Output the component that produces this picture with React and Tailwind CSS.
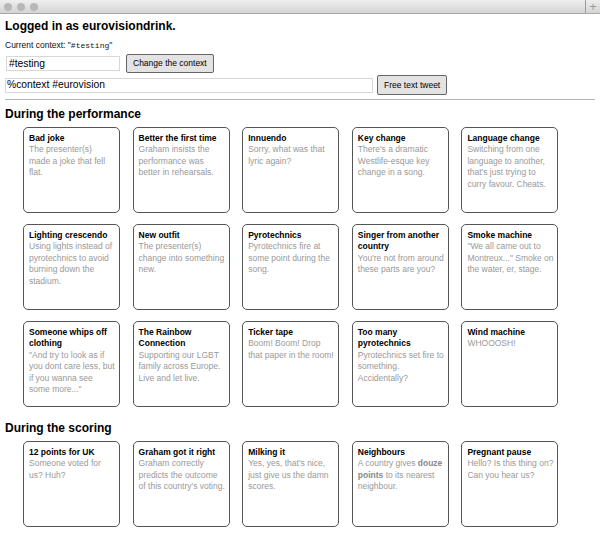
const performance = [
  { title: 'Bad joke', text: 'The presenter(s) made a joke that fell flat.' },
  { title: 'Better the first time', text: 'Graham insists the performance was better in rehearsals.' },
  { title: 'Innuendo', text: 'Sorry, what was that lyric again?' },
  { title: 'Key change', text: "There's a dramatic Westlife-esque key change in a song." },
  { title: 'Language change', text: "Switching from one language to another, that's just trying to curry favour. Cheats." },
  { title: 'Lighting crescendo', text: 'Using lights instead of pyrotechnics to avoid burning down the stadium.' },
  { title: 'New outfit', text: 'The presenter(s) change into something new.' },
  { title: 'Pyrotechnics', text: 'Pyrotechnics fire at some point during the song.' },
  { title: 'Singer from another country', text: "You're not from around these parts are you?" },
  { title: 'Smoke machine', text: '"We all came out to Montreux..." Smoke on the water, er, stage.' },
  { title: 'Someone whips off clothing', text: '"And try to look as if you dont care less, but if you wanna see some more..."' },
  { title: 'The Rainbow Connection', text: 'Supporting our LGBT family across Europe. Live and let live.' },
  { title: 'Ticker tape', text: 'Boom! Boom! Drop that paper in the room!' },
  { title: 'Too many pyrotechnics', text: 'Pyrotechnics set fire to something. Accidentally?' },
  { title: 'Wind machine', text: 'WHOOOSH!' },
];

const scoring = [
  { title: '12 points for UK', text: 'Someone voted for us? Huh?' },
  { title: 'Graham got it right', text: "Graham correctly predicts the outcome of this country's voting." },
  { title: 'Milking it', text: "Yes, yes, that's nice, just give us the damn scores." },
  {
    title: 'Neighbours',
    text: (
      <>
        A country gives <b className="font-bold text-[#888]">douze points</b> to its nearest neighbour.
      </>
    ),
  },
  { title: 'Pregnant pause', text: 'Hello? Is this thing on? Can you hear us?' },
];

function Card({ title, text }) {
  return (
    <div className="h-[86px] w-[97px] rounded-[5px] border border-[#555] bg-white pl-[5px] pr-[3.7px] pt-[5px] leading-[11.4px]">
      <div className="font-bold text-black">{title}</div>
      <div className="text-[#999]">{text}</div>
    </div>
  );
}

function Grid({ items }) {
  return (
    <div className="grid grid-cols-[repeat(5,97px)] gap-x-[12.6px] gap-y-[11px] pl-[18px]">
      {items.map((c) => (
        <Card key={c.title} {...c} />
      ))}
    </div>
  );
}

export default function App() {
  return (
    <div className="min-h-[537px] bg-white font-['Liberation_Sans',Arial,sans-serif] text-[8.5px] text-[#111]">
      <div className="flex h-[14px] items-center border-b border-[#a8a8a8] bg-gradient-to-b from-[#efefef] to-[#d4d4d4]">
        <div className="flex gap-[5px] pl-[4px]">
          <span className="h-[8px] w-[8px] rounded-full bg-[#b8b8b8]" />
          <span className="h-[8px] w-[8px] rounded-full bg-[#b8b8b8]" />
          <span className="h-[8px] w-[8px] rounded-full bg-[#b8b8b8]" />
        </div>
        <div className="ml-auto flex h-full w-[15px] items-center justify-center border-l border-[#9a9a9a] text-[12px] leading-none text-[#999]">
          +
        </div>
      </div>

      <div className="px-[5px]">
        <h1 className="mt-[5px] text-[12px] font-bold leading-[14px] text-black">Logged in as eurovisiondrink.</h1>
        <p className="mt-[7px] leading-[10px]">
          Current context: "<span className="font-['Liberation_Mono',monospace] text-[8px]">#testing</span>"
        </p>
        <div className="mt-[3px] flex items-center gap-[6px]">
          <input
            defaultValue="#testing"
            className="ml-[1px] h-[15px] w-[114px] border border-[#d8d8d8] px-[2px] text-[10.3px] text-black outline-none"
          />
          <button className="h-[19px] rounded-[2px] border border-[#666] bg-[#e3e3e3] px-[6px] text-[8.5px] text-black">
            Change the context
          </button>
        </div>
        <div className="mt-[2px] flex items-center gap-[4px]">
          <input
            defaultValue="%context #eurovision"
            className="h-[15px] w-[368px] border border-[#d8d8d8] px-[1px] text-[10.3px] text-black outline-none"
          />
          <button className="h-[20px] rounded-[2px] border border-[#666] bg-[#e3e3e3] px-[6px] text-[8.5px] text-black">
            Free text tweet
          </button>
        </div>
        <hr className="mt-[4px] w-[590px] border-t border-[#b5b5b5]" />

        <h2 className="mt-[7px] mb-[6px] text-[12px] font-bold leading-[14px] text-black">During the performance</h2>
        <Grid items={performance} />

        <h2 className="mt-[14px] mb-[6px] text-[12px] font-bold leading-[14px] text-black">During the scoring</h2>
        <Grid items={scoring} />
      </div>
    </div>
  );
}
